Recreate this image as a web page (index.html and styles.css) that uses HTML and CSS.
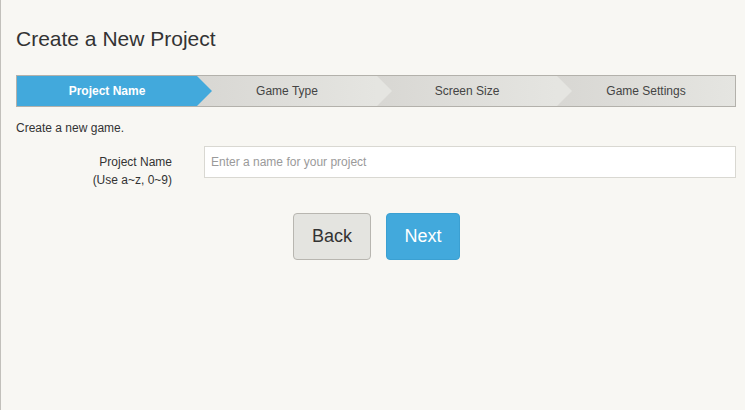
FILE: index.html
```html
<!DOCTYPE html>
<html>
<head>
<meta charset="utf-8">
<link rel="stylesheet" href="styles.css">
</head>
<body>
<div class="panel">
  <h1 class="title">Create a New Project</h1>
  <div class="steps">
    <div class="step active">Project Name</div>
    <div class="step">Game Type</div>
    <div class="step">Screen Size</div>
    <div class="step last">Game Settings</div>
  </div>
  <p class="intro">Create a new game.</p>
  <div class="form-row">
    <label class="label" for="pname">Project Name<br>(Use a~z, 0~9)</label>
    <input class="input" id="pname" type="text" placeholder="Enter a name for your project">
  </div>
  <div class="actions">
    <button class="btn btn-back">Back</button>
    <button class="btn btn-next">Next</button>
  </div>
</div>
</body>
</html>
```

FILE: styles.css
```css
html, body {
  margin: 0;
  padding: 0;
  background: #ffffff;
}
body {
  font-family: "Liberation Sans", Arial, sans-serif;
  color: #333333;
}
.panel {
  box-sizing: border-box;
  width: 745px;
  height: 410px;
  background: #f8f7f3;
  border-left: 1px solid #c2c0bb;
  padding: 27px 9px 0 15px;
}
.title {
  margin: 0;
  font-size: 21px;
  line-height: 24px;
  font-weight: normal;
  color: #333333;
}
.steps {
  margin-top: 24px;
  display: flex;
  height: 30px;
  border: 1px solid #b3b1ab;
}
.step {
  position: relative;
  flex: 0 0 180px;
  line-height: 30px;
  font-size: 12px;
  text-align: center;
  color: #444444;
  background: linear-gradient(to right, #d8d7d3, #e5e5e1);
}
.step.last {
  flex: 1 1 auto;
}
.step::after {
  content: "";
  position: absolute;
  top: 0;
  right: -15px;
  width: 15px;
  height: 30px;
  background: #e5e5e1;
  clip-path: polygon(0 0, 100% 50%, 0 100%);
  z-index: 1;
}
.step.last::after {
  display: none;
}
.step.active {
  background: #42a9dc;
  color: #ffffff;
  font-weight: bold;
}
.step.active::after {
  background: #42a9dc;
}
.intro {
  margin: 13px 0 0 0;
  font-size: 12px;
  line-height: 16px;
}
.form-row {
  margin-top: 10px;
  display: flex;
  gap: 32px;
  align-items: flex-start;
}
.label {
  flex: 0 0 156px;
  text-align: right;
  font-size: 12px;
  line-height: 18px;
  padding-top: 7px;
  color: #333333;
}
.input {
  box-sizing: border-box;
  flex: 1 1 auto;
  height: 32px;
  margin: 0;
  border: 1px solid #d9d8d2;
  background: #ffffff;
  padding: 0 6px;
  font-family: "Liberation Sans", Arial, sans-serif;
  font-size: 12px;
  color: #333333;
  outline: none;
}
.input::placeholder {
  color: #9a9a9a;
}
.actions {
  margin-top: 24px;
  display: flex;
  justify-content: center;
  gap: 15px;
  padding-left: 1px;
}
.btn {
  box-sizing: border-box;
  height: 47px;
  border-radius: 4px;
  font-family: "Liberation Sans", Arial, sans-serif;
  font-size: 18px;
  padding: 0;
  margin: 0;
  cursor: pointer;
}
.btn-back {
  width: 78px;
  background: #e4e4e0;
  border: 1px solid #b8b6b0;
  color: #333333;
}
.btn-next {
  width: 74px;
  background: #42a9dc;
  border: 1px solid #3ba0d2;
  color: #ffffff;
}
```
